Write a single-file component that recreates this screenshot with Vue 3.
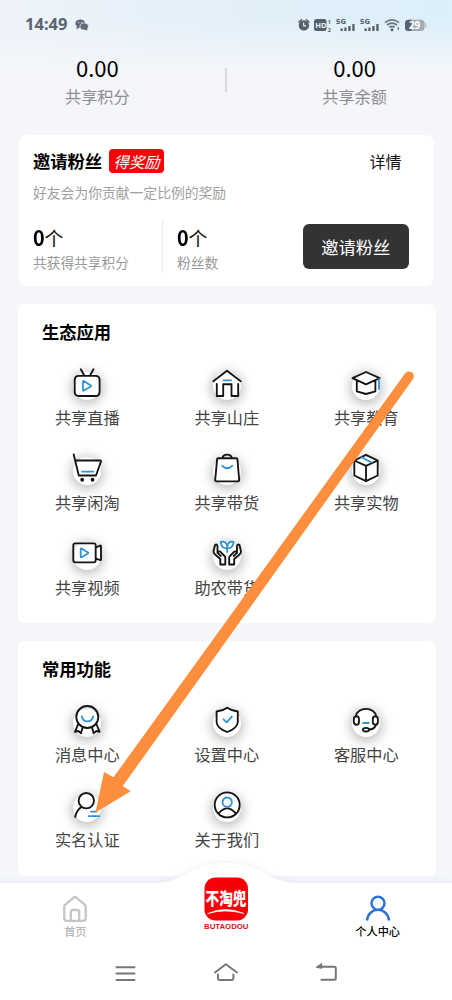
<script setup>
const BLUE = 'b'
const ecoApps = [
  { label: '共享直播', shapes: [
    { d: 'M9.8 1.3 13 7M22.5 1.3 19.3 7M8 7.8h16.3q4.3 0 4.3 4.3v11.6q0 4.3-4.3 4.3H8q-4.3 0-4.3-4.3V12.100q0-4.300 4.300-4.300Z' },
    { d: 'M12 13.400v8.800q0 .8.800.4l7-4.200q.6-.5 0-1l-7-4.300q-.8-.4-.8.3Z', c: BLUE } ] },
  { label: '共享山庄', shapes: [
    { d: 'M2.300 13.300 16 2.800 29.700 13.300M5.800 16v12h6.400V16.200h8.300V28h6.700V16' },
    { d: 'M12.500 12.300H20', c: BLUE } ] },
  { label: '共享教育', shapes: [
    { d: 'M2.500 10.200 16 4l13.700 6.200L16 16.300ZM6.800 12.500v10.800L16 26l9.400-2.700V12.500' },
    { d: 'M29 11v10', c: BLUE } ] },
  { label: '共享闲淘', shapes: [
    { d: 'M2.700 1.500 7.800 22.500H25L30 8.500q.3-1-1-1H4.500' },
    { d: 'M10.200 26.700a1 1 0 1 0 2 0a1 1 0 1 0-2 0M20.500 26.700a1 1 0 1 0 2 0a1 1 0 1 0-2 0' },
    { d: 'M11 18.600H22.300', c: BLUE } ] },
  { label: '共享带货', shapes: [
    { d: 'M7.200 5.200H25.300q1 0 1.100 1L28.200 27q.1 1.300-1.200 1.300H5.400q-1.300 0-1.200-1.300L6.100 6.200q.1-1 1.100-1ZM11.500 5c.8-4.600 8.500-4.600 9.300 0' },
    { d: 'M11.200 12.800q5 4.800 10 0', c: BLUE } ] },
  { label: '共享实物', shapes: [
    { d: 'M16 1.800 27.700 7.500V22.500L16 28.200 4.300 22.500V7.500ZM4.300 7.500 16 12.900 27.700 7.500M16 12.900V28' },
    { d: 'M11.500 4.300 21 9.300', c: BLUE } ] },
  { label: '共享视频', shapes: [
    { d: 'M4.300 5.300H22.700q2 0 2 2v15q0 2-2 2H4.300q-2 0-2-2v-15q0-2 2-2ZM25 9.500l4.200-2q.8-.2.800.7V21.500q0 .8-.8.600L25 20.500' },
    { d: 'M9.700 11v7.700q0 .9.900.5l6.300-3.800q.7-.5 0-1l-6.300-3.900q-.9-.4-.9.5Z', c: BLUE } ] },
  { label: '助农带货', shapes: [
    { d: 'M6.500 15V8Q6 5.600 4 7L2.500 13.500Q2.500 15 4 16.500L9.300 21V26.500H14.300V19.700Q14.300 18.800 13.500 18L9.500 13.800Q7.500 12.500 6.700 14.800L9.800 18M26 15V8Q26.500 5.600 28.500 7L30 13.500Q30 15 28.500 16.500L23.200 21V26.500H18.200V19.700Q18.200 18.800 19 18L23 13.800Q25 12.500 25.800 14.800L22.700 18' },
    { d: 'M16.200 14V8.500M16.200 10.300Q10 10.500 9.800 3.800 15.500 3 16.200 8.500 17 3 22.500 3.800 22.300 10.500 16.200 10.300', c: BLUE } ] }
]
const tools = [
  { label: '消息中心', shapes: [
    { d: 'M5.300 12a11 11 0 1 0 22 0a11 11 0 1 0-22 0M7 19.500 4 26.800 7.300 26 10 28.300 11.600 22.500M25.600 19.500l3 7.300-3.300-.8-2.700 2.300L21 22.500' },
    { d: 'M10.800 11.500c1.500 6.500 9.800 6.500 11.300 0', c: BLUE } ] },
  { label: '设置中心', shapes: [
    { d: 'M16.200 2.700Q20.500 5.800 26.800 6.500V17Q26.300 23.500 16.200 27 6 23.500 5.600 17V6.500Q12 5.800 16.200 2.700Z' },
    { d: 'M12.500 14.300 15.700 17.300 20.900 11.700', c: BLUE } ] },
  { label: '客服中心', shapes: [
    { d: 'M5.700 11.500C7.500 1.300 24.500 1.300 26.300 11.500M6.500 11.200q2.500 0 2.500 3v2.500q0 3-2.500 3t-2.700-3v-2.500q0-3 2.700-3ZM25.300 11.200q2.600 0 2.600 3v2.500q0 3-2.600 3t-2.500-3v-2.500q0-3 2.500-3ZM26 20Q24 24.500 19 24.500M13 24.700a3 1.800 0 1 0 6 0a3 1.800 0 1 0-6 0' },
    { d: 'M13.200 18h5.500', c: BLUE } ] },
  { label: '实名认证', shapes: [
    { d: 'M7.600 10.700a7.700 7.700 0 1 0 15.400 0a7.700 7.700 0 1 0-15.400 0M10.500 17Q5.500 20 4.200 27' },
    { d: 'M20 21.600h5.500M17.700 26.200h10.600', c: BLUE } ] },
  { label: '关于我们', shapes: [
    { d: 'M3.700 14.900a12.500 12.500 0 1 0 25 0a12.500 12.500 0 1 0-25 0M7.800 23.200Q16.200 13.500 24.600 23.200' },
    { d: 'M11.500 12.200a4.700 4.700 0 1 0 9.400 0a4.700 4.700 0 1 0-9.400 0', c: BLUE } ] }
]
const sections = [
  { title: '生态应用', items: ecoApps, kind: 'eco' },
  { title: '常用功能', items: tools, kind: 'tools' }
]
</script>

<template>
  <div class="phone">
    <header class="status">
      <span class="time">14:49</span>
      <svg class="chat" width="14" height="12" viewBox="0 0 14 12">
        <ellipse cx="5.300" cy="4.500" rx="4.900" ry="4.100" fill="#5e6a75" />
        <path d="M1.500 10.500 2 7 5 8Z" fill="#5e6a75" />
        <ellipse cx="9.200" cy="7.500" rx="4.200" ry="3.500" fill="#5e6a75" stroke="#e9f1f8" stroke-width=".7" />
        <path d="M12.300 11.500 9 10.500 12 9Z" fill="#5e6a75" />
        <circle cx="3.800" cy="3.700" r=".6" fill="#e9f1f8" /><circle cx="6.700" cy="3.500" r=".6" fill="#e9f1f8" />
      </svg>
      <svg class="indicators" width="130" height="16" viewBox="297 17 130 16">
        <g fill="#555f69">
          <circle cx="303.900" cy="25.400" r="5.200" />
          <path d="M298.500 22.500 302 19.300M306 19.300 309.400 22.500" stroke="#555f69" stroke-width="1.500" />
          <path d="M303.700 22.500v3.300h2.500" fill="none" stroke="#e2eff8" stroke-width="1.200" />
          <rect x="314" y="19" width="12.500" height="12" rx="2.500" />
          <text x="315.200" y="28" font-size="7.500" font-weight="700" fill="#e5f1f8">HD</text>
          <text x="327.800" y="23.700" font-size="5.500" font-weight="700">1</text>
          <text x="327.800" y="31.500" font-size="5.500" font-weight="700">2</text>
          <text x="336" y="24" font-size="7.800" font-weight="700">5G</text>
          <path d="M340.500 28.500h2.300v2.500h-2.300zM344.300 27.500h2.300v3.500h-2.300zM348.300 26h2.300v5h-2.300zM352.300 24h2.300v7h-2.300z" />
          <text x="360" y="24" font-size="7.800" font-weight="700">5G</text>
          <path d="M364.500 28.500h2.300v2.500h-2.300zM368.300 27.500h2.300v3.500h-2.300zM372.300 26h2.300v5h-2.300zM376.300 24h2.300v7h-2.300z" />
          <circle cx="392" cy="29.700" r="1.500" />
        </g>
        <path d="M385 22.600q7-5.300 14 0M387 25q5-3.700 10 0M389.300 27.300q2.700-2 5.400 0" fill="none" stroke="#68737d" stroke-width="1.700" />
        <path d="M398.300 27v3" stroke="#68737d" stroke-width="1.200" />
        <rect x="405" y="19.700" width="19.500" height="11.300" rx="3.500" fill="#a5adb4" />
        <path d="M408.500 19.700h3v11.300h-3q-3.500 0-3.500-3.500v-4.300q0-3.500 3.500-3.500Z" fill="#59636c" />
        <path d="M425.300 23q1.400 2.300 0 4.600" stroke="#a5adb4" fill="none" />
        <text x="409" y="28.900" font-size="9.800" font-weight="700" fill="#fff">29</text>
      </svg>
    </header>

    <section class="balances">
      <div class="balance"><b>0.00</b><span>共享积分</span></div>
      <i class="rule"></i>
      <div class="balance"><b>0.00</b><span>共享余额</span></div>
    </section>

    <section class="card invite">
      <div class="invite-head">
        <h2>邀请粉丝</h2><span class="badge">得奖励</span><a>详情</a>
      </div>
      <p>好友会为你贡献一定比例的奖励</p>
      <div class="stats">
        <div class="stat first"><div><b>0</b>个</div><span>共获得共享积分</span></div>
        <div class="stat"><div><b>0</b>个</div><span>粉丝数</span></div>
        <button>邀请粉丝</button>
      </div>
    </section>

    <section v-for="s in sections" :key="s.title" class="card" :class="s.kind">
      <h2>{{ s.title }}</h2>
      <div class="grid">
        <div v-for="item in s.items" :key="item.label" class="cell">
          <div class="icon">
            <svg width="32" height="32" viewBox="0 0 32 32">
              <path v-for="(p, i) in item.shapes" :key="i" :d="p.d" :class="{ blue: p.c }" />
            </svg>
          </div>
          <span>{{ item.label }}</span>
        </div>
      </div>
    </section>

    <nav class="tabs">
      <svg class="tab-shape" width="452" height="84" viewBox="0 0 452 84">
        <path d="M0 24H154C184 24 188 4 226 4S268 24 298 24H452V84H0Z" fill="#fff" />
      </svg>
      <div class="tab home">
        <svg width="24" height="28" viewBox="0 0 24 28"><path d="M2 9.800 11 2.300q1-.7 2 0L22 9.800q.7.700.700 1.500V23.500q0 2.300-2.300 2.300H3.600q-2.300 0-2.300-2.300V11.300q0-.8.700-1.500ZM7.800 25.500V17q0-2 2-2h4.400q2 0 2 2v8.500" /></svg>
        <span>首页</span>
      </div>
      <div class="tab brand">
        <svg width="46" height="53" viewBox="0 0 46 53">
          <rect x="1.500" y=".5" width="43.500" height="43" rx="11" fill="#f80005" />
          <text transform="translate(2.500 28) scale(1 1.250)" font-size="14" font-weight="900" textLength="41" lengthAdjust="spacingAndGlyphs" fill="#fff">不淘兜</text>
          <path d="M5 36.500Q22 28.500 41 36.500 22 31.500 5 36.500Z" fill="#fff" stroke="#fff" stroke-width=".6" />
          <text class="latin" x="1" y="51.500" font-size="8" font-weight="700" textLength="44.500" lengthAdjust="spacingAndGlyphs" fill="#cf1519">BUTAODOU</text>
        </svg>
      </div>
      <div class="tab me">
        <svg width="26" height="28" viewBox="0 0 26 28"><path d="M6.500 8.200a6.500 6.500 0 1 0 13 0a6.500 6.500 0 1 0-13 0M2 25.500C3.500 11.300 22.500 11.300 24 25.500" /></svg>
        <span>个人中心</span>
      </div>
    </nav>

    <footer class="system">
      <svg width="452" height="58" viewBox="0 942 452 58">
        <path d="M116.500 967.300h18M116.500 973.600h18M116.500 980h18M215 972.500 225.800 964.300 237 972.500M218 974.500v3.800q0 1.700 1.700 1.700h12q1.700 0 1.700-1.700v-3.800M319 966.800h15.300q1.500 0 1.500 1.500v10q0 1.500-1.500 1.500h-12.800" />
        <path class="tip" d="M316.500 967 321.700 963.500V968Z" />
      </svg>
    </footer>

    <svg class="pointer" width="452" height="1000" viewBox="0 0 452 1000">
      <path d="M405 373.500A4.800 4.800 0 0 1 413 379L122.800 786 130.700 791.300 95.500 812.500 104 772 113.500 777.300Z" fill="#fd8e3d" />
    </svg>
  </div>
</template>

<style>
body { margin: 0; }
</style>

<style scoped>
.phone { position: relative; width: 452px; height: 1000px; overflow: hidden; display: flex; flex-direction: column; font-family: "Noto Sans CJK SC", sans-serif; color: #111;
  background: linear-gradient(to bottom, transparent 20px, #f4f6fa 72px) no-repeat, linear-gradient(to right, #eef3f9 0, #e4f0f9 45%, #dceffa 100%) 0 0 / 100% 73px no-repeat, #f4f6fa; }
h2, p { margin: 0; }
.status { height: 50px; flex: none; display: flex; align-items: center; padding: 0 25px; box-sizing: border-box; }
.time { font: 700 16.500px/20px "Noto Sans", sans-serif; color: #5b6570; width: 50px; margin-top: -2px; }
.indicators { margin-left: auto; font-family: "Noto Sans", sans-serif; }
.balances { height: 85px; flex: none; display: flex; justify-content: center; }
.balance { width: 196px; text-align: center; display: flex; flex-direction: column; }
.rule { width: 2.500px; height: 24px; margin: 18px 30px 0; background: #d8d9dd; }
.balance b { font-size: 22px; line-height: 34px; font-weight: 400; color: #000; }
.balance span { font-size: 16.200px; line-height: 24px; color: #8c8e92; }
.card { background: #fff; border-radius: 6px; flex: none; box-sizing: border-box; width: 418px; margin-left: 18px; }
h2 { font-size: 17.300px; line-height: 24px; font-weight: 700; color: #000; }
.invite { width: 415px; height: 151px; margin-left: 19px; padding: 14px 25.500px 0 14px; border-radius: 8px; }
.invite-head { display: flex; align-items: center; height: 24px; }
.badge { margin-left: 7px; width: 55px; height: 24px; border-radius: 4px; background: #fb0006; color: #fff; font: italic 15.400px/24px "Noto Sans CJK SC", sans-serif; text-align: center; }
.invite-head a { margin-left: auto; margin-right: 7px; font-size: 16px; }
.invite p { font-size: 13.800px; line-height: 20px; color: #a0a0a0; margin-top: 9px; }
.stats { display: flex; margin-top: 18px; }
.stat { height: 53px; padding: 3px 0 0 14px; box-sizing: border-box; }
.stat.first { width: 130px; padding-left: 0; border-right: 1px solid #ececec; }
.stat div { font-size: 19px; line-height: 27px; height: 27px; white-space: nowrap; }
.stat b { font-size: 22px; font-weight: 700; color: #000; display: inline-block; width: 11.500px; transform: scaleX(.9); transform-origin: left; }
.stat span { display: block; font-size: 13.700px; line-height: 22px; color: #999; margin-top: 1px; white-space: nowrap; }
button { margin: 4px 0 0 auto; width: 105.500px; height: 45px; padding: 0; border: 0; border-radius: 6px; background: #333; color: #fff; font: 400 17.300px/45px "Noto Sans CJK SC", sans-serif; }
.eco, .tools { padding-top: 16px; }
.eco h2, .tools h2 { padding-left: 24px; }
.eco { height: 319px; margin-top: 18px; }
.tools { height: 235px; margin-top: 18px; }
.grid { display: grid; grid-template-columns: repeat(3, 139.500px); grid-auto-rows: 85px; margin: 24px 0 0 -.5px; }
.cell { display: flex; flex-direction: column; align-items: center; }
.cell span { font-size: 16.200px; line-height: 24px; color: #444; margin-top: 5px; }
.icon { position: relative; width: 32px; height: 32px; }
.icon::before { content: ""; position: absolute; left: 2px; top: 4px; width: 28px; height: 28px; border-radius: 50%; background: #fff; box-shadow: 0 2px 12px 2px rgba(0,0,0,.27); }
.icon svg { position: relative; display: block; overflow: visible; }
.icon path { fill: none; stroke: #141414; stroke-width: 1.850; stroke-linecap: round; stroke-linejoin: round; }
.icon path.blue { stroke: #2e92d3; stroke-width: 1.800; }
.tabs { position: absolute; left: 0; top: 859px; width: 452px; height: 84px; display: grid; grid-template-columns: repeat(3, 1fr); }
.tab-shape { position: absolute; inset: 0; filter: drop-shadow(0 -1px 3px rgba(70,90,130,.09)); }
.tab { position: relative; display: flex; flex-direction: column; align-items: center; }
.tab path { stroke-linecap: round; }
.tab span { font-size: 11.200px; line-height: 16px; }
.home, .me { padding-top: 36px; }
.home span { color: #b8b8bc; font-weight: 500; }
.home > svg > path { fill: none; stroke: #c5c5ca; stroke-width: 2.300; }
.me { left: 1px; }
.me > svg > path { fill: none; stroke: #2f73d9; stroke-width: 2.500; stroke-linecap: butt; }
.me span { color: #000; font-weight: 500; }
.brand { padding-top: 18px; }
.latin { font-family: "Liberation Sans", Arial, sans-serif; }
.system { position: absolute; left: 0; bottom: 0; width: 452px; height: 58px; background: #fff; }
.system svg { display: block; }
.system path { fill: none; stroke: #777; stroke-width: 2; stroke-linecap: round; stroke-linejoin: round; }
.system .tip { fill: #777; stroke-width: 1; }
.pointer { position: absolute; left: 0; top: 0; pointer-events: none; }
</style>
